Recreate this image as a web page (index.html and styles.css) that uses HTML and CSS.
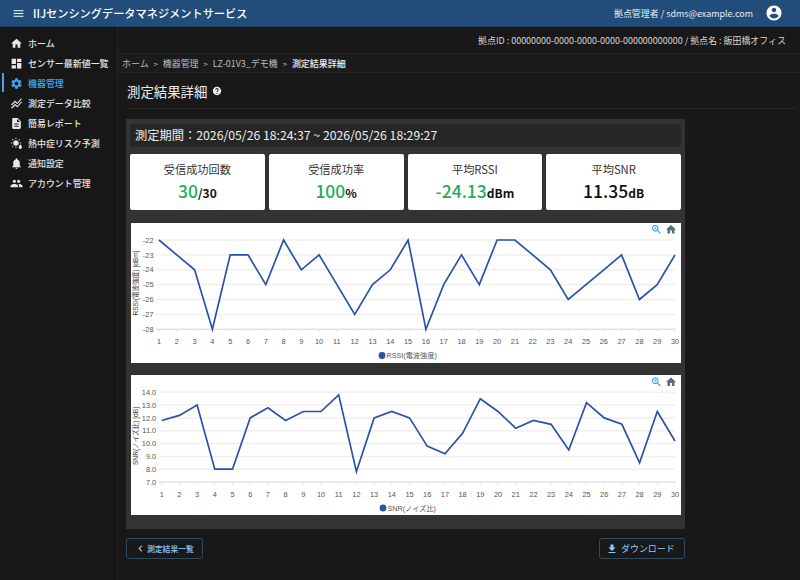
FILE: index.html
```html
<!DOCTYPE html>
<html lang="ja">
  <head>
    <meta charset="UTF-8" />
    <meta name="viewport" content="width=device-width, initial-scale=1.0" />
    <title>測定結果詳細</title>
    <link rel="stylesheet" href="styles.css">
  </head>
  <body>
    <header class="app-bar">
      <svg class="menu-icon" viewBox="0 0 24 24"><path d="M3 18h18v-2H3v2zm0-5h18v-2H3v2zm0-7v2h18V6H3z"/></svg>
      <div class="app-title">IIJセンシングデータマネジメントサービス</div>
      <div class="app-user">拠点管理者 / sdms@example.com</div>
      <svg class="user-icon" viewBox="0 0 24 24"><path d="M12 2C6.48 2 2 6.48 2 12s4.48 10 10 10 10-4.48 10-10S17.52 2 12 2zm0 3c1.66 0 3 1.34 3 3s-1.34 3-3 3-3-1.34-3-3 1.34-3 3-3zm0 14.2c-2.5 0-4.71-1.28-6-3.22.03-1.99 4-3.08 6-3.08 1.99 0 5.97 1.09 6 3.08-1.29 1.94-3.5 3.22-6 3.22z"/></svg>
    </header>

    <div class="layout">
      <!-- Sidebar -->
      <nav class="sidebar">
        <a class="nav-item">
          <svg viewBox="0 0 24 24"><path d="M10 20v-6h4v6h5v-8h3L12 3 2 12h3v8z"/></svg>ホーム
        </a>
        <a class="nav-item">
          <svg viewBox="0 0 24 24"><path d="M3 13h8V3H3v10zm0 8h8v-6H3v6zm10 0h8V11h-8v10zm0-18v6h8V3h-8z"/></svg>センサー最新値一覧
        </a>
        <a class="nav-item active">
          <svg viewBox="0 0 24 24"><path d="M19.14 12.94c.04-.3.06-.61.06-.94 0-.32-.02-.64-.07-.94l2.03-1.58c.18-.14.23-.41.12-.61l-1.92-3.32c-.12-.22-.37-.29-.59-.22l-2.39.96c-.5-.38-1.03-.7-1.62-.94l-.36-2.54c-.04-.24-.24-.41-.48-.41h-3.84c-.24 0-.43.17-.47.41l-.36 2.54c-.59.24-1.13.57-1.62.94l-2.39-.96c-.22-.08-.47 0-.59.22L2.74 8.87c-.12.21-.08.47.12.61l2.03 1.58c-.05.3-.09.63-.09.94s.02.64.07.94l-2.03 1.58c-.18.14-.23.41-.12.61l1.92 3.32c.12.22.37.29.59.22l2.39-.96c.5.38 1.03.7 1.62.94l.36 2.54c.05.24.24.41.48.41h3.84c.24 0 .44-.17.47-.41l.36-2.54c.59-.24 1.13-.56 1.62-.94l2.39.96c.22.08.47 0 .59-.22l1.92-3.32c.12-.22.07-.47-.12-.61l-2.01-1.58zM12 15.6c-1.98 0-3.6-1.62-3.6-3.6s1.62-3.6 3.6-3.6 3.6 1.62 3.6 3.6-1.62 3.6-3.6 3.6z"/></svg>機器管理
        </a>
        <a class="nav-item">
          <svg viewBox="0 0 24 24"><path d="M2 19.99l7.5-7.51 4 4 7.09-7.97L22 9.92l-8.5 9.56-4-4-6 6.01-1.5-1.5zm1.5-4.5l6-6.01 4 4L22 3.92l-1.41-1.41-7.09 7.97-4-4L2 13.99l1.5 1.5z"/></svg>測定データ比較
        </a>
        <a class="nav-item">
          <svg viewBox="0 0 24 24"><path d="M14 2H6c-1.1 0-1.99.9-1.99 2L4 20c0 1.1.89 2 1.99 2H18c1.1 0 2-.9 2-2V8l-6-6zm2 16H8v-2h8v2zm0-4H8v-2h8v2zm-3-5V3.5L18.5 9H13z"/></svg>簡易レポート
        </a>
        <a class="nav-item">
          <svg viewBox="0 0 24 24">
            <circle cx="11" cy="11" r="5"/>
            <path d="M10.2 1.5h1.6v2.4h-1.6zM10.2 18h1.6v2.4h-1.6zM1.5 10.2h2.4v1.6h-2.4zM18 10.2h2.4v1.6h-2.4zM3.6 4.7l1.1-1.1 1.7 1.7-1.1 1.1zM15.6 5.3l1.7-1.7 1.1 1.1-1.7 1.7zM4.7 18.4l-1.1-1.1 1.7-1.7 1.1 1.1z"/>
            <path d="M19 13.5c1.5 2.2 3 3.8 3 5.6a3 3 0 0 1-6 0c0-1.8 1.5-3.4 3-5.6z"/>
          </svg>熱中症リスク予測
        </a>
        <a class="nav-item">
          <svg viewBox="0 0 24 24"><path d="M12 22c1.1 0 2-.9 2-2h-4c0 1.1.89 2 2 2zm6-6v-5c0-3.07-1.64-5.64-4.5-6.32V4c0-.83-.67-1.5-1.5-1.5s-1.5.67-1.5 1.5v.68C7.63 5.36 6 7.92 6 11v5l-2 2v1h16v-1l-2-2z"/></svg>通知設定
        </a>
        <a class="nav-item">
          <svg viewBox="0 0 24 24"><path d="M16 11c1.66 0 2.99-1.34 2.99-3S17.66 5 16 5c-1.66 0-3 1.34-3 3s1.34 3 3 3zm-8 0c1.66 0 2.99-1.34 2.99-3S9.66 5 8 5C6.34 5 5 6.34 5 8s1.34 3 3 3zm0 2c-2.33 0-7 1.17-7 3.5V19h14v-2.5c0-2.33-4.67-3.5-7-3.5zm8 0c-.29 0-.62.02-.97.05 1.16.84 1.97 1.97 1.97 3.45V19h6v-2.5c0-2.33-4.67-3.5-7-3.5z"/></svg>アカウント管理
        </a>
      </nav>

      <main class="main">
        <div class="site-info">拠点ID : 00000000-0000-0000-0000-000000000000 / 拠点名 : 飯田橋オフィス</div>

        <div class="breadcrumb">
          <span>ホーム</span><span class="sep">&gt;</span>
          <span>機器管理</span><span class="sep">&gt;</span>
          <span>LZ-01V3_デモ機</span><span class="sep">&gt;</span>
          <span class="current">測定結果詳細</span>
        </div>

        <div class="page-head">
          <h1>測定結果詳細</h1>
          <svg class="help-icon" viewBox="0 0 24 24"><path d="M12 2C6.48 2 2 6.48 2 12s4.48 10 10 10 10-4.48 10-10S17.52 2 12 2zm1 17h-2v-2h2v2zm2.07-7.75l-.9.92C13.45 12.9 13 13.5 13 15h-2v-.5c0-1.1.45-2.1 1.17-2.83l1.24-1.26c.37-.36.59-.86.59-1.41 0-1.1-.9-2-2-2s-2 .9-2 2H8c0-2.21 1.79-4 4-4s4 1.79 4 4c0 .88-.36 1.68-.93 2.25z"/></svg>
        </div>

        <section class="panel">
          <div class="period">測定期間：2026/05/26 18:24:37 ~ 2026/05/26 18:29:27</div>

          <div class="stats">
            <div class="stat">
              <div class="stat-label">受信成功回数</div>
              <div class="stat-value"><span class="num good">30</span><span class="unit">/30</span></div>
            </div>
            <div class="stat">
              <div class="stat-label">受信成功率</div>
              <div class="stat-value"><span class="num good">100</span><span class="unit">%</span></div>
            </div>
            <div class="stat">
              <div class="stat-label">平均RSSI</div>
              <div class="stat-value"><span class="num good">-24.13</span><span class="unit">dBm</span></div>
            </div>
            <div class="stat">
              <div class="stat-label">平均SNR</div>
              <div class="stat-value"><span class="num">11.35</span><span class="unit">dB</span></div>
            </div>
          </div>

          <div class="chart" id="chart-rssi"></div>
          <div class="chart chart-second" id="chart-snr"></div>
        </section>

        <div class="actions">
          <button class="btn btn-back">
            <svg viewBox="0 0 24 24"><path d="M15.41 7.41L14 6l-6 6 6 6 1.41-1.41L10.83 12z"/></svg>測定結果一覧
          </button>
          <button class="btn btn-download">
            <svg viewBox="0 0 24 24"><path d="M19 9h-4V3H9v6H5l7 7 7-7zM5 18v2h14v-2H5z"/></svg>ダウンロード
          </button>
        </div>
      </main>
    </div>

    <script src="charts.js"></script>
  </body>
</html>
```

FILE: styles.css
```css
* {
  box-sizing: border-box;
}
html,
body {
  height: 100%;
}
body {
  margin: 0;
  overflow: hidden;
  background-color: #181818;
  color: #e4e4e4;
  font-family: "Noto Sans CJK JP", "Noto Sans", sans-serif;
}

/* App bar */
.app-bar {
  display: flex;
  align-items: center;
  height: 27px;
  padding: 0 17px 0 12px;
  background-color: #224d7b;
  border-bottom: 1px solid #1d3f63;
  color: #fff;
}
.menu-icon {
  width: 13px;
  height: 13px;
  margin-right: 8px;
  fill: #fff;
}
.app-title {
  flex: 1;
  font-size: 11.2px;
  font-weight: 500;
  line-height: 26px;
}
.app-user {
  font-size: 8.96px;
  color: #e6edf5;
}
.user-icon {
  width: 18px;
  height: 18px;
  margin-left: 12px;
  fill: #fff;
}

.layout {
  display: flex;
  height: 553px;
}

/* Sidebar */
.sidebar {
  width: 118px;
  flex-shrink: 0;
  padding-top: 6px;
  background-color: #171717;
  border-right: 1px solid #232323;
}
.nav-item {
  position: relative;
  display: flex;
  align-items: center;
  height: 20px;
  padding-left: 10px;
  font-size: 8.96px;
  font-weight: 500;
  color: #e4e4e4;
}
.nav-item svg {
  width: 13px;
  height: 13px;
  margin-right: 5px;
  fill: #e8e8e8;
}
.nav-item.active {
  color: #42a5f5;
}
.nav-item.active svg {
  fill: #42a5f5;
}
.nav-item.active::before {
  content: "";
  position: absolute;
  left: 2px;
  top: 0;
  width: 2px;
  height: 19px;
  background-color: #42a5f5;
}

/* Main */
.main {
  flex: 1;
  min-width: 0;
}
.site-info {
  height: 27px;
  padding-right: 14px;
  border-bottom: 1px solid #252525;
  font-size: 8.96px;
  line-height: 28px;
  text-align: right;
  color: #d6d6d6;
}
.breadcrumb {
  display: flex;
  align-items: center;
  height: 19px;
  padding-left: 4px;
  background-color: #1b1b1b;
  border-bottom: 1px solid #252525;
  font-size: 8.96px;
  color: #bdbdbd;
}
.breadcrumb .sep {
  margin: 0 5px;
  font-size: 7.5px;
}
.breadcrumb .current {
  color: #eee;
  font-weight: 500;
}
.page-head {
  display: flex;
  align-items: center;
  height: 36px;
  margin: 0 3px 10px 9px;
  border-bottom: 1px solid #262626;
}
.page-head h1 {
  margin: 0;
  font-size: 13.4px;
  font-weight: 400;
  color: #eee;
}
.help-icon {
  width: 10px;
  height: 10px;
  margin-left: 5px;
  fill: #eee;
}

/* Panel */
.panel {
  width: 559px;
  height: 410px;
  margin-left: 8px;
  padding: 5px 4px 0 4px;
  background-color: #333;
}
.period {
  height: 23px;
  padding-left: 5px;
  background-color: #262626;
  border-radius: 3px;
  font-size: 12.25px;
  line-height: 23px;
  color: #eee;
}
.stats {
  display: grid;
  grid-template-columns: repeat(4, 1fr);
  gap: 4px;
  margin-top: 7px;
}
.stat {
  height: 56px;
  padding-top: 7px;
  background-color: #fff;
  border-radius: 2px;
  text-align: center;
  color: #333;
}
.stat-label {
  font-size: 11.2px;
  line-height: 17px;
}
.stat-value {
  margin-top: 1px;
  color: #111;
  line-height: 24px;
  font-weight: 500;
}
.num {
  font-size: 17.5px;
}
.unit {
  font-size: 12px;
  font-weight: 700;
}
.good {
  color: #1fad5e;
}

/* Charts */
.chart {
  width: 550px;
  height: 140px;
  margin: 13px 0 0 1px;
  background-color: #fff;
}
.chart-second {
  margin-top: 12px;
}
.chart svg {
  display: block;
  font-family: "Liberation Sans", "Noto Sans CJK JP", sans-serif;
}
.grid-line {
  stroke: #efefef;
  stroke-width: 1.5;
}
.axis-line {
  stroke: #e3e3e3;
  stroke-width: 1.5;
}
.tick {
  stroke: #e0e0e0;
}
.series {
  fill: none;
  stroke: #2a52a8;
  stroke-width: 1.7;
  stroke-linejoin: miter;
}
.axis-label {
  font-size: 7.4px;
  fill: #555;
}
.axis-title {
  font-size: 6.6px;
  fill: #333;
}
.legend-label {
  font-size: 7.2px;
  fill: #555;
}
.legend-dot {
  fill: #2a52a8;
}
.tool-zoom {
  fill: #2196f3;
}
.tool-home {
  fill: #546e7a;
}

/* Buttons */
.actions {
  display: flex;
  justify-content: space-between;
  width: 559px;
  margin: 9px 0 0 8px;
}
.btn {
  display: flex;
  align-items: center;
  height: 21px;
  padding: 0;
  background: none;
  border: 1px solid #2f4a60;
  border-radius: 3px;
  font-family: inherit;
  font-size: 8.96px;
  color: #90caf9;
}
.btn svg {
  fill: #90caf9;
}
.btn-back {
  width: 77px;
  padding-left: 7px;
  font-size: 7.8px;
  font-weight: 500;
}
.btn-back svg {
  width: 13px;
  height: 13px;
}
.btn-download {
  width: 86px;
  padding-left: 6px;
}
.btn-download svg {
  width: 12px;
  height: 12px;
  margin-right: 3px;
}
```

FILE: charts.js
```js
// Chart data
const rssi = [-22, -23, -24, -28, -23, -23, -25, -22, -24, -23, -25, -27, -25, -24, -22,
  -28, -25, -23, -25, -22, -22, -23, -24, -26, -25, -24, -23, -26, -25, -23];
const snr = [11.8, 12.2, 13, 8, 8, 12, 12.8, 11.8, 12.5, 12.5, 13.8, 7.8, 12, 12.5, 12,
  9.8, 9.2, 10.8, 13.5, 12.5, 11.2, 11.8, 11.5, 9.5, 13.2, 12, 11.5, 8.5, 12.5, 10.2];

const ZOOM_PATH = "M15.5 14h-.79l-.28-.27C15.41 12.59 16 11.11 16 9.5 16 5.91 13.09 3 9.5 3S3 5.91 3 9.5 5.91 16 9.5 16c1.61 0 3.09-.59 4.23-1.57l.27.28v.79l5 4.99L20.49 19l-4.99-5zm-6 0C7.01 14 5 11.99 5 9.5S7.01 5 9.5 5 14 7.01 14 9.5 11.99 14 9.5 14zM12 10h-2v2H9v-2H7V9h2V7h1v2h2v1z";
const HOME_PATH = "M10 20v-6h4v6h5v-8h3L12 3 2 12h3v8z";

function drawChart(el, opts) {
  const xAt = (i) => opts.left + (i * (opts.right - opts.left)) / 29;
  const yAt = (v) => opts.top + ((opts.max - v) * (opts.bottom - opts.top)) / (opts.max - opts.min);
  let html = "";

  // Grid and y labels
  for (let v = opts.max; v >= opts.min; v--) {
    const y = yAt(v).toFixed(1);
    const cls = v === opts.min ? "axis-line" : "grid-line";
    html += `<line class="${cls}" x1="${opts.left - 3}" x2="${opts.right}" y1="${y}" y2="${y}"/>`;
    const label = opts.decimals ? v.toFixed(opts.decimals) : v;
    html += `<text class="axis-label" x="${opts.left - 5.5}" y="${+y + 2.6}" text-anchor="end">${label}</text>`;
  }

  // X ticks and labels
  opts.data.forEach(function (v, i) {
    const x = xAt(i).toFixed(1);
    html += `<line class="tick" x1="${x}" x2="${x}" y1="${opts.bottom}" y2="${opts.bottom + 2.5}"/>`;
    html += `<text class="axis-label" x="${x}" y="${opts.bottom + 14.5}" text-anchor="middle">${i + 1}</text>`;
  });

  const points = opts.data.map((v, i) => `${xAt(i).toFixed(1)},${yAt(v).toFixed(1)}`).join(" ");
  html += `<polyline class="series" points="${points}"/>`;

  html += `<text class="axis-title" transform="translate(6.5 ${opts.titleY}) rotate(-90)" text-anchor="middle">${opts.title}</text>`;

  // Legend
  html += `<circle class="legend-dot" cx="${opts.legendX}" cy="${opts.legendY}" r="3.4"/>`;
  html += `<text class="legend-label" x="${opts.legendX + 4.5}" y="${opts.legendY + 2.6}">${opts.legend}</text>`;

  // Toolbar
  html += `<svg x="519.5" y="${opts.toolY}" width="12" height="12" viewBox="0 0 24 24"><path class="tool-zoom" d="${ZOOM_PATH}"/></svg>`;
  html += `<svg x="534" y="${opts.toolY}" width="12" height="12" viewBox="0 0 24 24"><path class="tool-home" d="${HOME_PATH}"/></svg>`;

  el.innerHTML = `<svg width="550" height="140" viewBox="0 0 550 140">${html}</svg>`;
}

drawChart(document.getElementById("chart-rssi"), {
  data: rssi, min: -28, max: -22, left: 28, right: 544, top: 17, bottom: 106.3,
  title: "RSSI(電波強度) [dBm]", titleY: 60, legend: "RSSI(電波強度)", legendX: 251, legendY: 132.5, toolY: 0.5,
});

drawChart(document.getElementById("chart-snr"), {
  data: snr, min: 7, max: 14, decimals: 1, left: 30.7, right: 544, top: 17.3, bottom: 107,
  title: "SNR(ノイズ比) [dB]", titleY: 61, legend: "SNR(ノイズ比)", legendX: 252, legendY: 133, toolY: 1,
});
```
